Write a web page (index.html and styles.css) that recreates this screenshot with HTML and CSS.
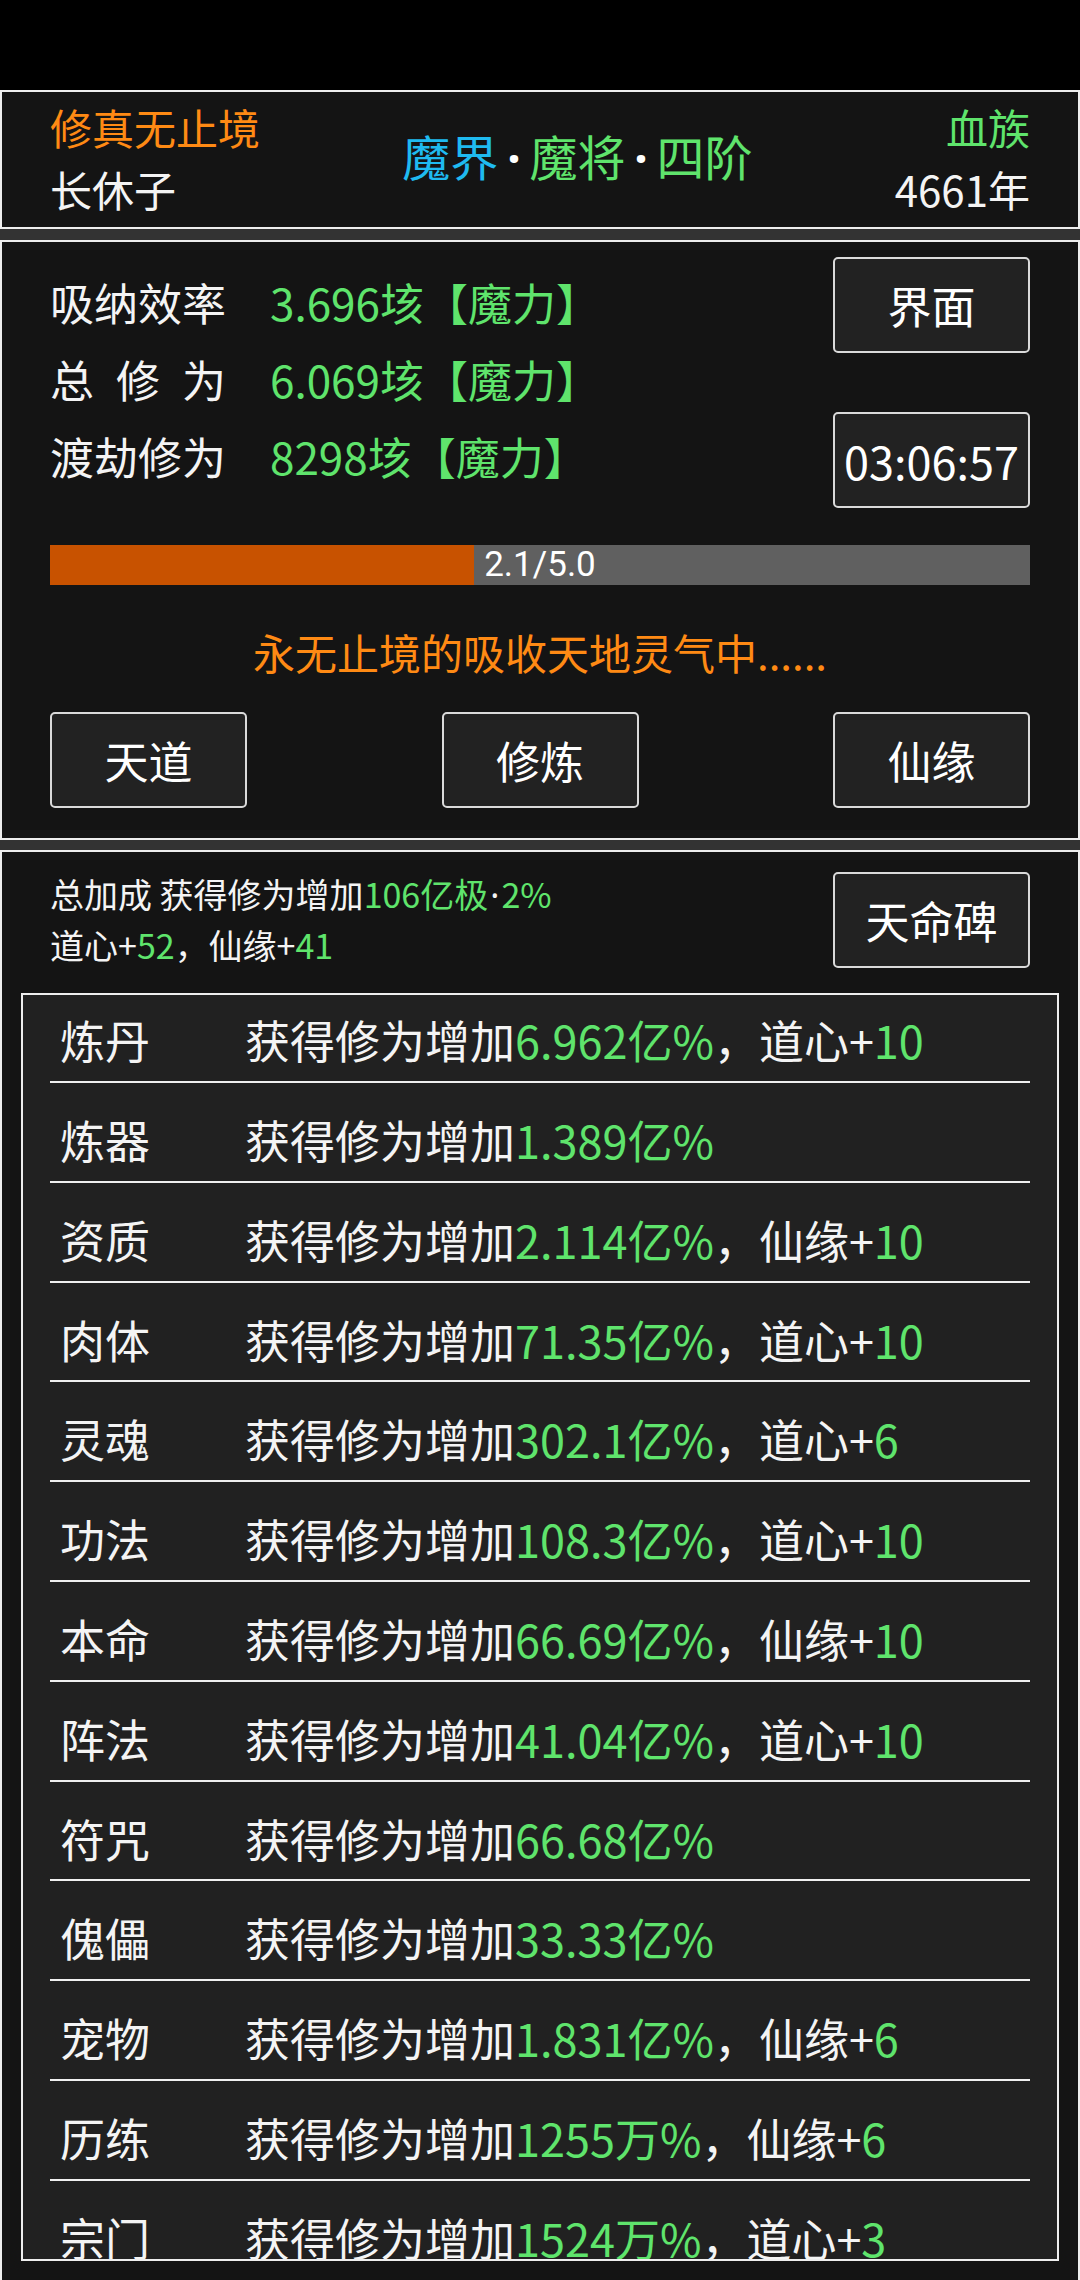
FILE: index.html
```html
<!DOCTYPE html>
<html lang="zh-CN">
<head>
<meta charset="utf-8">
<title>修真无止境</title>
<link rel="stylesheet" href="styles.css">
</head>
<body>
<div class="statusbar"></div>

<div class="panel head">
  <div class="head-col">
    <div class="orange">修真无止境</div>
    <div>长休子</div>
  </div>
  <div class="title"><span class="cyan">魔界</span><span class="tdot">·</span><span class="green">魔将</span><span class="tdot">·</span><span class="green">四阶</span></div>
  <div class="head-col right">
    <div class="green">血族</div>
    <div>4661年</div>
  </div>
</div>

<div class="panel main">
  <div class="stats-row">
    <div class="stats">
      <div class="stat"><span class="label">吸纳效率</span><span class="green">3.696垓【魔力】</span></div>
      <div class="stat"><span class="label spread"><span>总</span><span>修</span><span>为</span></span><span class="green">6.069垓【魔力】</span></div>
      <div class="stat"><span class="label">渡劫修为</span><span class="green">8298垓【魔力】</span></div>
    </div>
    <div class="btn-col">
      <div class="btn">界面</div>
      <div class="btn timer">03:06:57</div>
    </div>
  </div>
  <div class="bar">
    <div class="bar-fill" style="width:43.3%"></div>
    <div class="bar-text">2.1/5.0</div>
  </div>
  <div class="msg">永无止境的吸收天地灵气中......</div>
  <div class="btn-row">
    <div class="btn">天道</div>
    <div class="btn">修炼</div>
    <div class="btn">仙缘</div>
  </div>
</div>

<div class="panel bonus">
  <div class="summary-row">
    <div class="summary">
      <div>总加成 获得修为增加<span class="green">106亿极<span class="ndot">·</span>2%</span></div>
      <div>道心+<span class="green">52</span>，仙缘+<span class="green">41</span></div>
    </div>
    <div class="btn">天命碑</div>
  </div>
  <div class="list">
    <div class="list-inner">
      <div class="row"><span class="rlabel">炼丹</span><span>获得修为增加<span class="green">6.962亿%</span>，道心+<span class="green">10</span></span></div>
      <div class="row"><span class="rlabel">炼器</span><span>获得修为增加<span class="green">1.389亿%</span></span></div>
      <div class="row"><span class="rlabel">资质</span><span>获得修为增加<span class="green">2.114亿%</span>，仙缘+<span class="green">10</span></span></div>
      <div class="row"><span class="rlabel">肉体</span><span>获得修为增加<span class="green">71.35亿%</span>，道心+<span class="green">10</span></span></div>
      <div class="row"><span class="rlabel">灵魂</span><span>获得修为增加<span class="green">302.1亿%</span>，道心+<span class="green">6</span></span></div>
      <div class="row"><span class="rlabel">功法</span><span>获得修为增加<span class="green">108.3亿%</span>，道心+<span class="green">10</span></span></div>
      <div class="row"><span class="rlabel">本命</span><span>获得修为增加<span class="green">66.69亿%</span>，仙缘+<span class="green">10</span></span></div>
      <div class="row"><span class="rlabel">阵法</span><span>获得修为增加<span class="green">41.04亿%</span>，道心+<span class="green">10</span></span></div>
      <div class="row"><span class="rlabel">符咒</span><span>获得修为增加<span class="green">66.68亿%</span></span></div>
      <div class="row"><span class="rlabel">傀儡</span><span>获得修为增加<span class="green">33.33亿%</span></span></div>
      <div class="row"><span class="rlabel">宠物</span><span>获得修为增加<span class="green">1.831亿%</span>，仙缘+<span class="green">6</span></span></div>
      <div class="row"><span class="rlabel">历练</span><span>获得修为增加<span class="green">1255万%</span>，仙缘+<span class="green">6</span></span></div>
      <div class="row"><span class="rlabel">宗门</span><span>获得修为增加<span class="green">1524万%</span>，道心+<span class="green">3</span></span></div>
    </div>
  </div>
</div>
</body>
</html>
```

FILE: styles.css
```css
html, body {
  margin: 0;
  padding: 0;
}
body {
  width: 1080px;
  height: 2280px;
  overflow: hidden;
  background: #333333;
  color: #f4f4f4;
  font-family: "Noto Sans CJK SC", "Noto Sans", sans-serif;
}
.statusbar {
  height: 90px;
  background: #000;
}
.green { color: #5fe46c; }
.orange { color: #ff8a14; }
.cyan { color: #1fbaf0; }

.panel {
  box-sizing: border-box;
  border: 2px solid #eeeeee;
  background: #141414;
}

/* header panel */
.head {
  height: 139px;
  padding: 4px 48px 7px;
  display: flex;
  justify-content: space-between;
  align-items: center;
}
.head-col {
  font-size: 42px;
  line-height: 62px;
}
.head-col.right { text-align: right; }
.title {
  font-size: 48px;
  line-height: 62px;
  white-space: nowrap;
  padding-bottom: 4px;
}
.tdot {
  display: inline-block;
  width: 31px;
  text-align: center;
  color: #ffffff;
  font-family: "Noto Sans", "DejaVu Sans", sans-serif;
  font-weight: bold;
}
.ndot {
  font-family: "Noto Sans", "DejaVu Sans", sans-serif;
  color: #f4f4f4;
  padding: 0 2px;
}

/* main panel */
.main {
  margin-top: 11px;
  height: 600px;
  padding: 15px 48px 0;
}
.stats-row {
  display: flex;
  justify-content: space-between;
}
.stats {
  padding-top: 7px;
}
.stat {
  display: flex;
  font-size: 44px;
  line-height: 77px;
}
.label {
  width: 176px;
  margin-right: 44px;
}
.spread {
  display: flex;
  justify-content: space-between;
}
.btn-col {
  display: flex;
  flex-direction: column;
  gap: 59px;
}
.btn {
  box-sizing: border-box;
  width: 197px;
  height: 96px;
  border: 2px solid #dadada;
  border-radius: 5px;
  background: #222222;
  color: #ffffff;
  font-size: 44px;
  display: flex;
  align-items: center;
  justify-content: center;
}
.timer {
  font-size: 45px;
}
.bar {
  margin-top: 37px;
  height: 40px;
  background: #606060;
  display: grid;
}
.bar-fill {
  grid-area: 1 / 1;
  background: #c85200;
  height: 40px;
}
.bar-text {
  grid-area: 1 / 1;
  justify-self: center;
  font-family: Roboto, "Noto Sans", sans-serif;
  font-size: 35px;
  line-height: 40px;
  color: #ffffff;
}
.msg {
  margin-top: 37px;
  font-size: 42px;
  line-height: 60px;
  text-align: center;
  color: #ff8a14;
}
.btn-row {
  margin-top: 30px;
  display: flex;
  justify-content: space-between;
}

/* bonus panel */
.bonus {
  margin-top: 10px;
  height: 1430px;
  border-bottom-width: 0;
  padding: 20px 0 0;
}
.summary-row {
  display: flex;
  justify-content: space-between;
  padding: 0 48px;
}
.summary {
  font-size: 34px;
  line-height: 50px;
  margin-top: -3px;
}
.list {
  box-sizing: border-box;
  margin: 23px 19px 0;
  height: 1268px;
  border: 2px solid #eeeeee;
  background: #212121;
  overflow: hidden;
}
.list-inner {
  margin: -11.8px 27px 0;
}
.row {
  box-sizing: border-box;
  height: 99.8px;
  border-bottom: 2px solid #f0f0f0;
  padding: 27px 0 0 10px;
  display: flex;
  font-size: 45px;
  line-height: 60px;
  white-space: nowrap;
}
.rlabel {
  width: 185px;
  flex: none;
}
```
